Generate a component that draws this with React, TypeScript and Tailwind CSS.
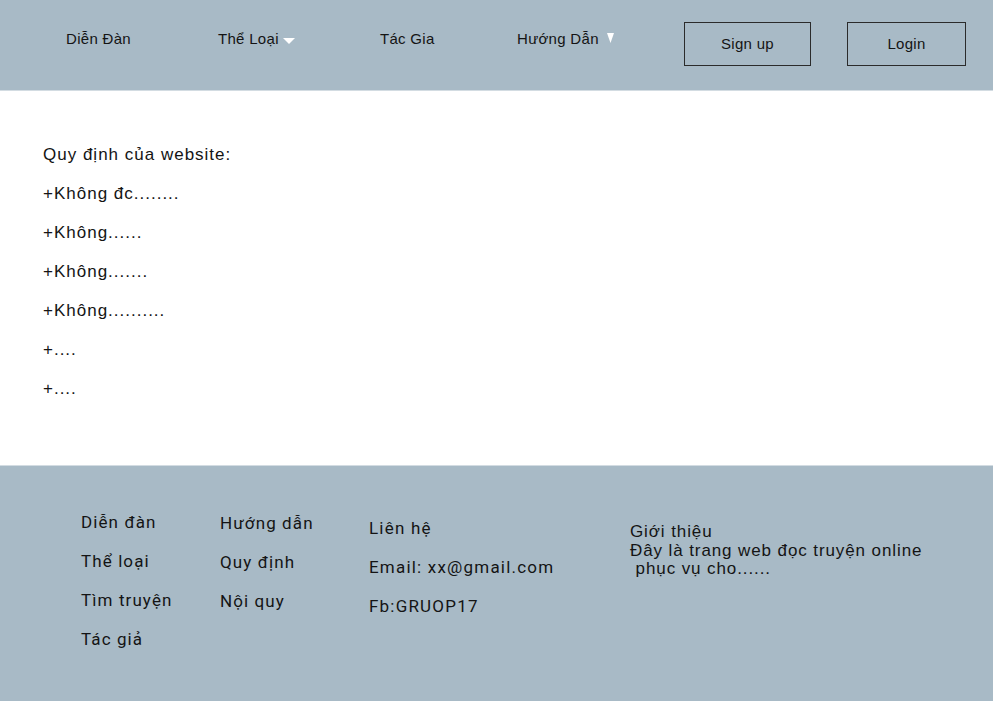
import React from 'react';

const DownTriangleWide = () => (
  <svg width="12" height="6" viewBox="0 0 12 6" className="ml-[4px] mt-[4px]">
    <polygon points="0,0 12,0 6,6" fill="#ffffff" />
  </svg>
);

const DownTriangleTall = () => (
  <svg width="7" height="10" viewBox="0 0 7 10" className="ml-[8px] -mt-[3px]">
    <polygon points="0,0 7,0 3.5,10" fill="#ffffff" />
  </svg>
);

const rules = ['+Không đc........', '+Không......', '+Không.......', '+Không..........', '+....', '+....'];

const footerCol1 = ['Diễn đàn', 'Thể loại', 'Tìm truyện', 'Tác giả'];
const footerCol2 = ['Hướng dẫn', 'Quy định', 'Nội quy'];
const footerCol3 = ['Liên hệ', 'Email: xx@gmail.com', 'Fb:GRUOP17'];

const App = () => {
  return (
    <div className="min-h-[701px] bg-white text-[#141414] font-['Liberation_Sans',Arial,sans-serif]">
      {/* Header */}
      <header className="h-[91px] bg-[#a8bac6] border-b border-[#d3dce2] flex items-start pl-[66px] pt-[22px]">
        <nav className="flex items-start text-[15px] tracking-[0.3px]">
          <div className="w-[152px] h-[34px] flex items-center">Diễn Đàn</div>
          <div className="w-[162px] h-[34px] flex items-center">
            Thể Loại
            <DownTriangleWide />
          </div>
          <div className="w-[137px] h-[34px] flex items-center">Tác Gia</div>
          <div className="w-[167px] h-[34px] flex items-center">
            Hướng Dẫn
            <DownTriangleTall />
          </div>
        </nav>
        <button className="w-[127px] h-[44px] border-[1.5px] border-[#2b2b2b] text-[15px] tracking-[0.3px] flex items-center justify-center">
          Sign up
        </button>
        <button className="ml-[36px] w-[119px] h-[44px] border-[1.5px] border-[#2b2b2b] text-[15px] tracking-[0.3px] flex items-center justify-center">
          Login
        </button>
      </header>

      {/* Content */}
      <main className="h-[374px] pl-[43px] pt-[44px] text-[17px] tracking-[1px]">
        <p className="leading-[39px]">Quy định của website:</p>
        {rules.map((rule, i) => (
          <p key={i} className="leading-[39px]">
            {rule}
          </p>
        ))}
      </main>

      {/* Footer */}
      <footer className="h-[236px] bg-[#a8bac6] border-t border-[#d3dce2] flex pl-[81px] pt-[37px] font-['Roboto',Arial,sans-serif]">
        <div className="w-[139px] text-[17px] tracking-[1.1px]">
          {footerCol1.map((item) => (
            <p key={item} className="leading-[39px]">
              {item}
            </p>
          ))}
        </div>
        <div className="w-[149px] text-[17px] tracking-[1.1px] pt-[1px]">
          {footerCol2.map((item) => (
            <p key={item} className="leading-[39px]">
              {item}
            </p>
          ))}
        </div>
        <div className="w-[261px] text-[17px] tracking-[1.2px] pt-[6px]">
          {footerCol3.map((item) => (
            <p key={item} className="leading-[39px]">
              {item}
            </p>
          ))}
        </div>
        <div className="pt-[20px] text-[17px] leading-[18.5px] tracking-[0.9px] font-['Liberation_Sans',Arial,sans-serif]">
          <p>Giới thiệu</p>
          <p>Đây là trang web đọc truyện online</p>
          <p>&nbsp;phục vụ cho......</p>
        </div>
      </footer>
    </div>
  );
};

export default App;
